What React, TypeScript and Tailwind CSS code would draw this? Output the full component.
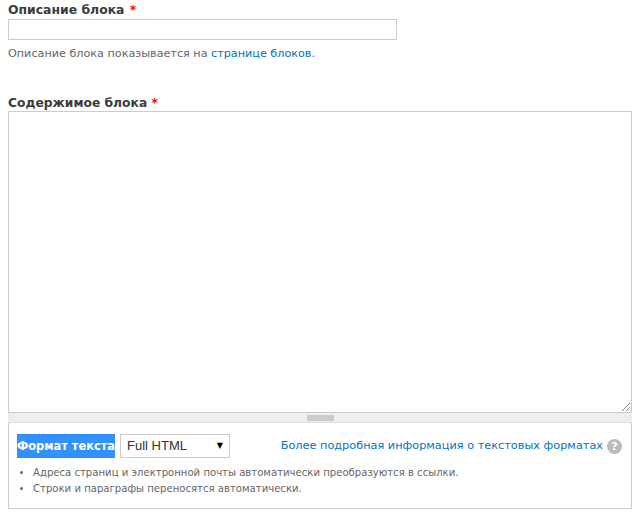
export default function App() {
  return (
    <div className="w-[640px] h-[518px] overflow-hidden bg-white px-2 font-['DejaVu_Sans',sans-serif] text-[#3b3b3b]">
      <div className="h-[19px] text-[12.4px] leading-[19px] font-bold">
        Описание блока <span className="ml-[1px] text-[#f00]">*</span>
      </div>
      <div className="w-[389px] h-[21px] border border-[#ccc]" />
      <p className="mt-[6px] h-[16px] text-[11.2px] leading-[16px] text-[#666]">
        Описание блока показывается на <a className="text-[#0074bd]">странице блоков.</a>
      </p>
      <div className="mt-[32px] h-[17px] text-[12.3px] leading-[18px] font-bold">
        Содержимое блока <span className="text-[#f00]">*</span>
      </div>
      <div className="relative h-[302px] border border-[#ccc]">
        <svg className="absolute right-0 bottom-0" width="10" height="10" viewBox="0 0 10 10">
          <path d="M1 9 L9 1 M5 9 L9 5" stroke="#888" strokeWidth="1" fill="none" />
        </svg>
      </div>
      <div className="flex h-[10px] items-center justify-center border-b border-[#ddd] bg-[#eee]">
        <div className="w-[27px] h-[6px] bg-[#ccc]" />
      </div>
      <div className="h-[86px] border border-t-0 border-[#ccc] pl-2 pr-[9px] pt-[11px]">
        <div className="flex items-center h-[24px]">
          <span className="h-[24px] w-[98px] overflow-hidden whitespace-nowrap bg-[#3390ff] text-[11.4px] leading-[24px] font-bold text-white">Формат текста</span>
          <div className="ml-[5px] flex w-[110px] h-[24px] items-center justify-between border border-[#ccc] pl-[6px] pr-[6px] text-[#333]">
            <span className="font-['Liberation_Sans',sans-serif] text-[13px]">Full HTML</span>
            <span className="text-[8px] text-black">▼</span>
          </div>
          <a className="ml-auto text-[11.3px] text-[#0074bd]">Более подробная информация о текстовых форматах</a>
          <span className="ml-[4px] flex h-[15px] w-[15px] items-center justify-center rounded-full bg-[#bbb] text-[11px] font-bold leading-none text-white">?</span>
        </div>
        <ul className="mt-[7px] list-disc pl-[16px] text-[10.1px] leading-[16px] text-[#666]">
          <li>Адреса страниц и электронной почты автоматически преобразуются в ссылки.</li>
          <li>Строки и параграфы переносятся автоматически.</li>
        </ul>
      </div>
    </div>
  )
}
